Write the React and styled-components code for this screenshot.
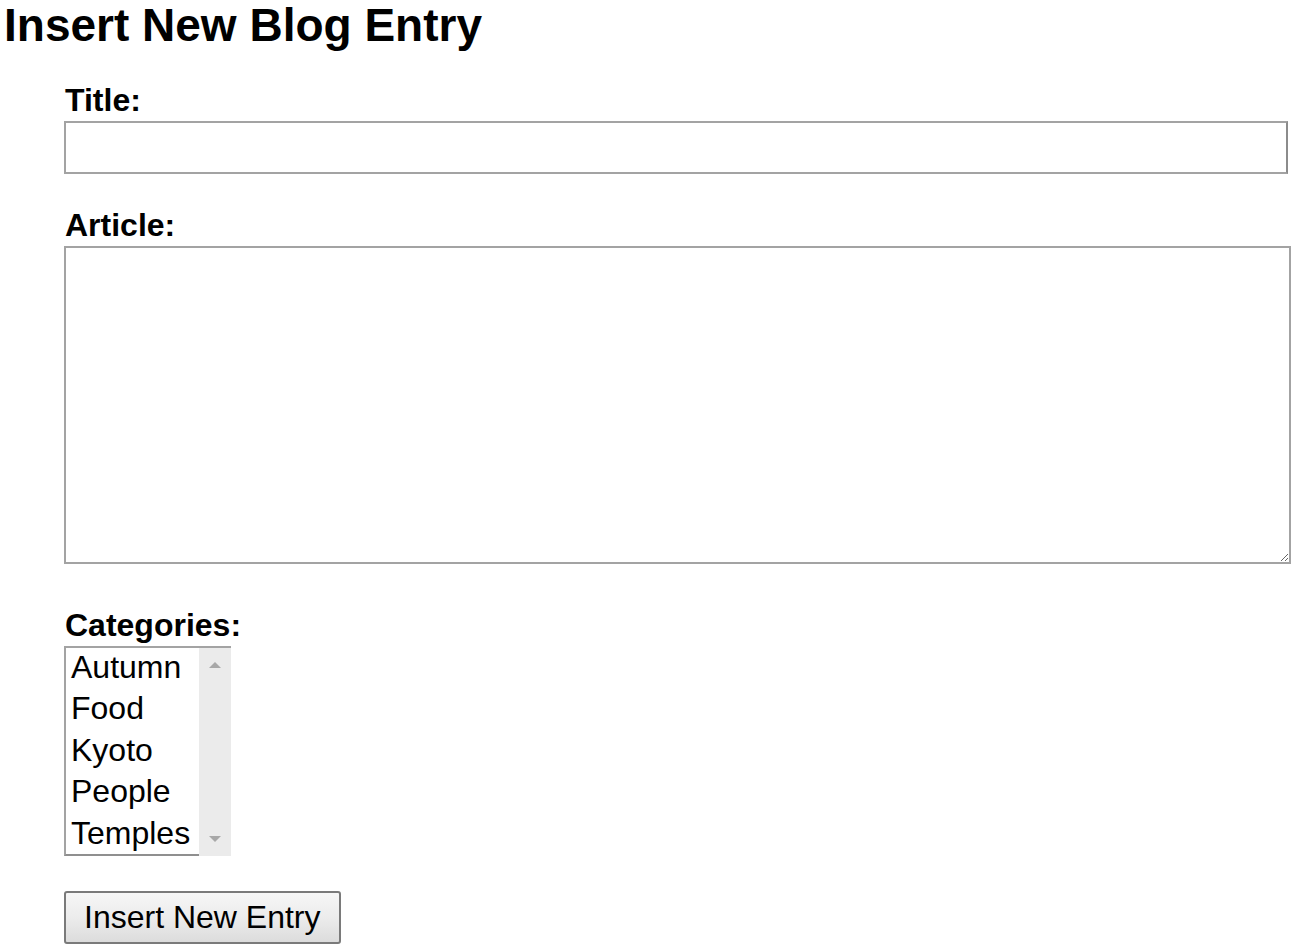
import styled, { createGlobalStyle } from "styled-components";

const categories = ["Autumn", "Food", "Kyoto", "People", "Temples"];

const App = () => {
  return (
    <>
      <GlobalStyle />
      <Page>
        <Heading>Insert New Blog Entry</Heading>
        <Form onSubmit={(e) => e.preventDefault()}>
          <Label htmlFor="title">Title:</Label>
          <TitleInput id="title" type="text" />

          <Label htmlFor="article" $gap={35}>
            Article:
          </Label>
          <ArticleArea id="article" />

          <Label $gap={45}>Categories:</Label>
          <ListBox role="listbox" aria-multiselectable="true">
            <Options>
              {categories.map((c) => (
                <Option key={c} role="option">
                  {c}
                </Option>
              ))}
            </Options>
            <ScrollTrack>
              <Arrow $up />
              <Arrow />
            </ScrollTrack>
          </ListBox>

          <SubmitButton type="submit">Insert New Entry</SubmitButton>
        </Form>
      </Page>
    </>
  );
};

const GlobalStyle = createGlobalStyle`
  body {
    margin: 0;
    background: #ffffff;
    color: #000000;
    font-family: "Liberation Sans", Arial, sans-serif;
  }
`;

const Page = styled.div`
  padding: 0 0 0 4px;
`;

const Heading = styled.h1`
  margin: 0;
  font-size: 46px;
  line-height: 50px;
  font-weight: 700;
  white-space: nowrap;
`;

const Form = styled.form`
  display: flex;
  flex-direction: column;
  align-items: flex-start;
  margin: 34px 0 0 60px;
`;

const Label = styled.label`
  display: block;
  margin-top: ${(p) => p.$gap || 0}px;
  margin-bottom: 5px;
  margin-left: 1px;
  font-size: 32px;
  line-height: 32px;
  font-weight: 700;
`;

const TitleInput = styled.input`
  box-sizing: border-box;
  width: 1224px;
  height: 53px;
  border: 2px solid #a3a3a3;
  border-right-color: #8c8c8c;
  padding: 0 6px;
  font-size: 30px;
  font-family: "Liberation Sans", Arial, sans-serif;
  outline: none;
`;

const ArticleArea = styled.textarea`
  display: block;
  box-sizing: border-box;
  width: 1227px;
  height: 318px;
  border: 2px solid #a3a3a3;
  padding: 6px;
  font-size: 30px;
  font-family: "Liberation Sans", Arial, sans-serif;
  resize: both;
  outline: none;
`;

const ListBox = styled.div`
  box-sizing: border-box;
  display: flex;
  width: 167px;
  height: 210px;
  border: 2px solid #a3a3a3;
  border-right: none;
  border-bottom-color: #8f8f8f;
`;

const Options = styled.div`
  flex: 1;
  padding: 0 0 0 5px;
`;

const Option = styled.div`
  height: 41.4px;
  font-size: 32px;
  line-height: 38px;
  white-space: nowrap;
`;

const ScrollTrack = styled.div`
  width: 32px;
  margin-bottom: -2px;
  background: #ebebeb;
  display: flex;
  flex-direction: column;
  justify-content: space-between;
  align-items: center;
  padding: 14px 0 14px;
`;

const Arrow = styled.span`
  width: 0;
  height: 0;
  border-left: 6px solid transparent;
  border-right: 6px solid transparent;
  ${(p) =>
    p.$up
      ? "border-bottom: 6px solid #a8a8a8;"
      : "border-top: 6px solid #a8a8a8;"}
`;

const SubmitButton = styled.button`
  box-sizing: border-box;
  margin-top: 35px;
  width: 277px;
  height: 53px;
  padding: 0 18px;
  border: 2px solid #7a7a7a;
  border-radius: 3px;
  background: linear-gradient(180deg, #f6f6f6 0%, #ececec 50%, #dcdcdc 100%);
  color: #000;
  font-size: 32px;
  font-family: "Liberation Sans", Arial, sans-serif;
  text-align: left;
  cursor: pointer;
`;

export default App;
